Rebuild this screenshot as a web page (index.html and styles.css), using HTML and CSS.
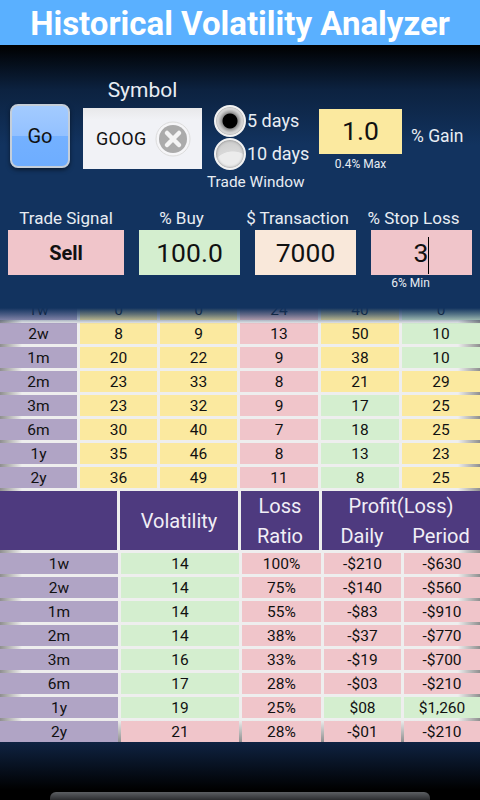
FILE: index.html
```html
<!DOCTYPE html>
<html>
<head>
	<meta charset="utf-8">
	<title>Historical Volatility Analyzer</title>
	<link rel="stylesheet" href="styles.css">
</head>
<body>
	<div class="app">
		<h1 class="title">Historical Volatility Analyzer</h1>

		<div class="controls">
			<div class="topRow">
				<button class="goBtn">Go</button>
				<div class="symbol">
					<div class="symbolLabel">Symbol</div>
					<div class="symbolBox">
						<span>GOOG</span>
						<svg class="clear" width="36" height="36" viewBox="0 0 36 36">
							<circle cx="18" cy="18" r="17" fill="#f6f6f8" stroke="#dcdcdc" stroke-width="1"/>
							<circle cx="18" cy="18" r="14" fill="#ababab"/>
							<path d="M12 12 L24 24 M24 12 L12 24" stroke="#f4f4f4" stroke-width="4.5" stroke-linecap="round"/>
						</svg>
					</div>
				</div>
				<div class="window">
					<div class="radioRow"><span class="radio on"></span><span>5 days</span></div>
					<div class="radioRow"><span class="radio"></span><span>10 days</span></div>
					<div class="windowLabel">Trade Window</div>
				</div>
				<div class="gain">
					<div class="gainBox">1.0</div>
					<div class="note">0.4% Max</div>
				</div>
				<div class="gainLabel">% Gain</div>
			</div>

			<div class="fieldRow">
				<div class="field signal">
					<div class="fieldLabel">Trade Signal</div>
					<div class="fieldBox pink sell">Sell</div>
				</div>
				<div class="field">
					<div class="fieldLabel shift">% Buy</div>
					<div class="fieldBox green">100.0</div>
				</div>
				<div class="field">
					<div class="fieldLabel shift">$ Transaction</div>
					<div class="fieldBox cream">7000</div>
				</div>
				<div class="field">
					<div class="fieldLabel shift">% Stop Loss</div>
					<div class="fieldBox pink">3<span class="cursor"></span></div>
					<div class="note stopNote">6% Min</div>
				</div>
			</div>
		</div>

		<div class="tables">
			<div class="scroll">
				<div class="row six"><div class="cell l">1w</div><div class="cell y">0</div><div class="cell y">0</div><div class="cell p">24</div><div class="cell y">40</div><div class="cell g">0</div></div>
				<div class="row six"><div class="cell l">2w</div><div class="cell y">8</div><div class="cell y">9</div><div class="cell p">13</div><div class="cell y">50</div><div class="cell g">10</div></div>
				<div class="row six"><div class="cell l">1m</div><div class="cell y">20</div><div class="cell y">22</div><div class="cell p">9</div><div class="cell y">38</div><div class="cell g">10</div></div>
				<div class="row six"><div class="cell l">2m</div><div class="cell y">23</div><div class="cell y">33</div><div class="cell p">8</div><div class="cell y">21</div><div class="cell y">29</div></div>
				<div class="row six"><div class="cell l">3m</div><div class="cell y">23</div><div class="cell y">32</div><div class="cell p">9</div><div class="cell g">17</div><div class="cell y">25</div></div>
				<div class="row six"><div class="cell l">6m</div><div class="cell y">30</div><div class="cell y">40</div><div class="cell p">7</div><div class="cell g">18</div><div class="cell y">25</div></div>
				<div class="row six"><div class="cell l">1y</div><div class="cell y">35</div><div class="cell y">46</div><div class="cell p">8</div><div class="cell g">13</div><div class="cell y">23</div></div>
				<div class="row six"><div class="cell l">2y</div><div class="cell y">36</div><div class="cell y">49</div><div class="cell p">11</div><div class="cell g">8</div><div class="cell y">25</div></div>

				<div class="head">
					<div class="headCell"></div>
					<div class="headCell">Volatility</div>
					<div class="headCell stack"><span>Loss</span><span>Ratio</span></div>
					<div class="headCell stack">
						<span>Profit(Loss)</span>
						<div class="pair"><span>Daily</span><span>Period</span></div>
					</div>
				</div>

				<div class="row five"><div class="cell l">1w</div><div class="cell g">14</div><div class="cell p">100%</div><div class="cell p">-$210</div><div class="cell p">-$630</div></div>
				<div class="row five"><div class="cell l">2w</div><div class="cell g">14</div><div class="cell p">75%</div><div class="cell p">-$140</div><div class="cell p">-$560</div></div>
				<div class="row five"><div class="cell l">1m</div><div class="cell g">14</div><div class="cell p">55%</div><div class="cell p">-$83</div><div class="cell p">-$910</div></div>
				<div class="row five"><div class="cell l">2m</div><div class="cell g">14</div><div class="cell p">38%</div><div class="cell p">-$37</div><div class="cell p">-$770</div></div>
				<div class="row five"><div class="cell l">3m</div><div class="cell g">16</div><div class="cell p">33%</div><div class="cell p">-$19</div><div class="cell p">-$700</div></div>
				<div class="row five"><div class="cell l">6m</div><div class="cell g">17</div><div class="cell p">28%</div><div class="cell p">-$03</div><div class="cell p">-$210</div></div>
				<div class="row five"><div class="cell l">1y</div><div class="cell g">19</div><div class="cell p">25%</div><div class="cell g">$08</div><div class="cell g">$1,260</div></div>
				<div class="row five"><div class="cell l">2y</div><div class="cell p">21</div><div class="cell p">28%</div><div class="cell p">-$01</div><div class="cell p">-$210</div></div>
			</div>
		</div>

		<div class="bottom">
			<div class="bar"></div>
		</div>
	</div>
</body>
</html>
```

FILE: styles.css
```css
html, body, h1, div{
	margin: 0; padding: 0;
}
body{
	background: #000;
	color: #000;
	font: 16px Roboto, "Liberation Sans", sans-serif;
}
.app{
	width: 480px;
	height: 800px;
	display: flex;
	flex-direction: column;
	overflow: hidden;
}
.title{
	height: 45px;
	background: #5ab0ff;
	color: #fff;
	font-size: 33px;
	font-weight: 700;
	line-height: 47px;
	text-align: center;
	flex: none;
}
.controls{
	height: 263px;
	flex: none;
	background: linear-gradient(#000 0, #0c2240 45px, #12335f 100px);
	color: #e8edf3;
}
.topRow{
	display: flex;
	align-items: flex-start;
	height: 150px;
	padding: 33px 0 0 10px;
	box-sizing: border-box;
}
.goBtn{
	width: 60px;
	height: 64px;
	margin-top: 26px;
	padding: 0;
	border: 2px solid #c4ced9;
	border-radius: 8px;
	background: linear-gradient(#a3cbff 0, #93c1ff 50%, #74b1ff 50%, #6eadff 100%);
	box-shadow: 0 2px 4px rgba(0, 0, 0, .5);
	color: #111;
	font: 20px Roboto, sans-serif;
}
.symbol{
	width: 119px;
	margin-left: 13px;
}
.symbolLabel{
	height: 24px;
	line-height: 24px;
	font-size: 21px;
	text-align: center;
}
.symbolBox{
	height: 61px;
	margin-top: 6px;
	background: linear-gradient(#e8e8ea, #f1f2f6 20%);
	display: flex;
	align-items: center;
	padding-left: 13px;
	color: #111;
	font-size: 18px;
	letter-spacing: .3px;
}
.clear{
	margin-left: 8px;
	flex: none;
}
.window{
	width: 105px;
	margin: 26px 0 0 12px;
	font-size: 18px;
}
.radioRow{
	display: flex;
	align-items: center;
	height: 33px;
}
.radio{
	width: 28px;
	height: 28px;
	margin-right: 1px;
	border: 2px solid #f2f2f2;
	border-radius: 50%;
	background: radial-gradient(circle at 60% 120%, #ececec 0, #ececec 58%, #d8d8d8 60%, #c8c8c8 100%);
	box-shadow: inset 0 0 3px #777;
	flex: none;
}
.radio.on{
	background: radial-gradient(circle, #000 0, #000 7px, #8f8f8f 8px, #efefef 13px);
}
.windowLabel{
	margin: 2px 0 0 -7px;
	font-size: 15.4px;
	line-height: 20px;
	white-space: nowrap;
}
.gain{
	width: 83px;
	margin-top: 31px;
}
.gainBox{
	height: 45px;
	background: #fbe99f;
	color: #111;
	font-size: 26.5px;
	line-height: 44px;
	text-align: center;
}
.note{
	margin-top: 2px;
	font-size: 12px;
	line-height: 16px;
	text-align: center;
}
.stopNote{
	margin: 0 0 0 -22px;
}
.gainLabel{
	margin: 48px 0 0 9px;
	font-size: 17.5px;
	line-height: 20px;
}
.fieldRow{
	display: flex;
	gap: 15px;
	padding: 11px 0 0 8px;
}
.field{
	width: 101px;
}
.signal{
	width: 116px;
}
.fieldLabel{
	height: 24px;
	line-height: 24px;
	font-size: 17px;
	text-align: center;
	white-space: nowrap;
}
.shift{
	margin-left: -16px;
}
.fieldBox{
	height: 45px;
	color: #111;
	font-size: 26.5px;
	line-height: 45px;
	text-align: center;
}
.pink{ background: #f0c5ca; }
.green{ background: #d4eecf; }
.cream{ background: #f9e8da; }
.fieldBox.sell{
	font-size: 20px;
	font-weight: 700;
	line-height: 47px;
}
.cursor{
	display: inline-block;
	width: 1px;
	height: 37px;
	background: #000;
	vertical-align: middle;
}
.tables{
	position: relative;
	height: 434px;
	flex: none;
	overflow: hidden;
	background:
		linear-gradient(to right, #8f8f8f, rgba(238, 238, 238, 0) 22px),
		linear-gradient(to left, #8f8f8f, rgba(238, 238, 238, 0) 22px),
		linear-gradient(to top, #8f8f8f, rgba(238, 238, 238, 0) 22px),
		#eee;
}
.tables::before{
	content: "";
	position: absolute;
	left: 0;
	right: 0;
	top: 0;
	height: 16px;
	background: linear-gradient(#12335f, rgba(18, 51, 95, .65) 40%, rgba(18, 51, 95, .3) 75%, rgba(18, 51, 95, 0));
}
.scroll{
	display: flex;
	flex-direction: column;
	gap: 3px;
	margin-top: -9px;
}
.row{
	display: grid;
	gap: 3px;
	height: 21px;
}
.six{
	grid-template-columns: 77px 77px 77px 78px 78px 78px;
}
.five{
	grid-template-columns: 118px 118px 79px 77px 76px;
}
.cell{
	height: 21px;
	color: #111;
	font-size: 15.5px;
	line-height: 22px;
	text-align: center;
}
.l{ background: #b0a4c5; }
.y{ background: #fbe99f; }
.p{ background: #f0c5ca; }
.g{ background: #d4eecf; }
.head{
	display: grid;
	grid-template-columns: 117px 118px 78px 158px;
	gap: 3px;
	height: 59px;
}
.headCell{
	height: 59px;
	background: #4e3a7f;
	color: #f1eef6;
	font-size: 20px;
	line-height: 61px;
	text-align: center;
}
.stack{
	display: flex;
	flex-direction: column;
	justify-content: center;
	line-height: 30px;
}
.pair{
	display: grid;
	grid-template-columns: 80px 78px;
}
.bottom{
	flex: 1;
	display: flex;
	align-items: flex-end;
	justify-content: center;
	background: linear-gradient(#0f2342, #000 48px);
}
.bar{
	width: 380px;
	height: 8px;
	border-radius: 6px 6px 0 0;
	background: linear-gradient(#5c5f63, #2c2d30);
}
```
